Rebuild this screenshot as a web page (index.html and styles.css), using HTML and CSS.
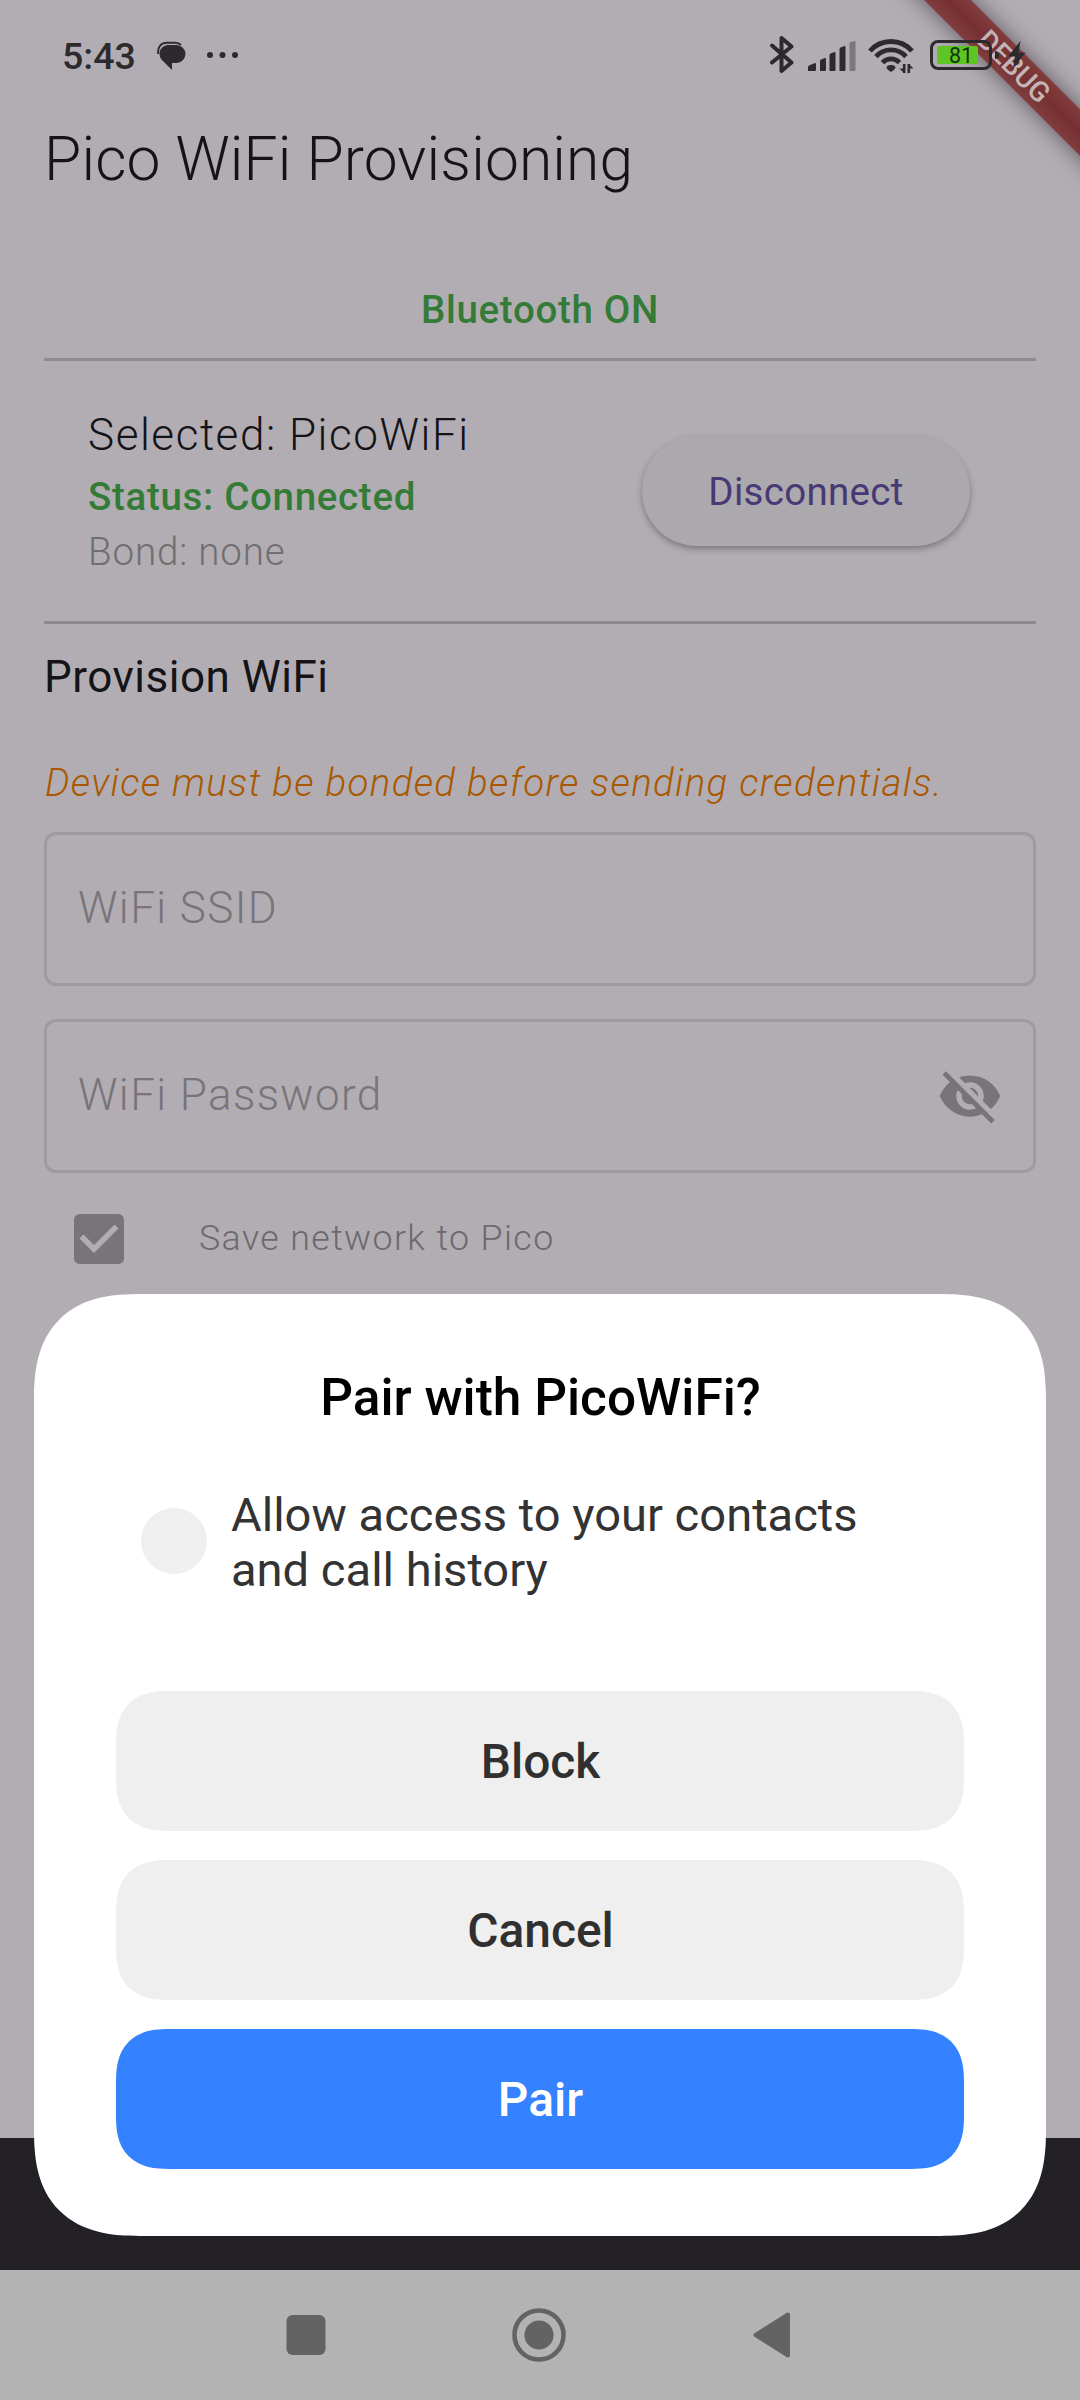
FILE: index.html
```html
<!DOCTYPE html>
<html lang="en">
<head>
<meta charset="utf-8">
<title>Pico WiFi Provisioning</title>
<link rel="stylesheet" href="styles.css">
</head>
<body>
<div class="screen">
  <div class="banner-clip"><div class="banner"><span>DEBUG</span></div></div>

  <header class="status-bar">
    <div class="status-left">
      <span class="clock">5:43</span>
      <svg class="ico-chat" width="30" height="30" viewBox="0 0 30 30">
        <path d="M1.200 13C.5 5 4.500 1.800 10 1.800h8c2.500 0 4.500.6 6 2.200" fill="none" stroke="#2c2a2d" stroke-width="2"/>
        <path d="M12 4h7.500a8.800 8.800 0 0 1 0 18H15v7L5.500 19.500C0 14 2.500 4 12 4z" fill="#2c2a2d"/>
      </svg>
      <svg class="ico-dots" width="34" height="8" viewBox="0 0 34 8" fill="#2c2a2d">
        <circle cx="4" cy="4" r="3"/><circle cx="16.500" cy="4" r="3"/><circle cx="29" cy="4" r="3"/>
      </svg>
    </div>
    <div class="status-right">
      <svg width="24" height="39" viewBox="0 0 24 39" fill="none" stroke="#2c2a2d" stroke-width="4" stroke-linejoin="round" stroke-linecap="round">
        <path d="M2 10.500 21.500 27.500 11.500 36V3L21.500 11.500 2 27.500"/>
      </svg>
      <svg class="ico-signal" width="48" height="30" viewBox="0 0 48 30" fill="#2c2a2d">
        <path d="M0 30v-4q0-1 1-1.500L7 22q1 0 1 1v6q0 1-1 1z"/>
        <path d="M12 30V20q0-1 1-1.500l4-1.500q1 0 1 1v11q0 1-1 1z"/>
        <path d="M21.500 30V14q0-1 1-1.500l4-1.500q1 0 1 1v17q0 1-1 1z"/>
        <path d="M31.500 30V8q0-1 1-1.500l4-1.500q1 0 1 1v23q0 1-1 1z"/>
        <path d="M41.500 30V2.500q0-1 1-1.500l4-1q1 0 1 1v28q0 1-1 1z" fill="#7b777c"/>
      </svg>
      <svg class="ico-wifi" width="48" height="37" viewBox="0 0 48 37" fill="none" stroke="#2c2a2d" stroke-width="4.800">
        <path d="M2 14A28 28 0 0 1 44 14"/>
        <path d="M8 19.700A20 20 0 0 1 38 19.700"/>
        <path d="M14.500 25.700a11.500 11.500 0 0 1 17 0"/>
        <path d="M18.500 31q0-3 4.500-3t4.500 3q-1 2-4.500 4-3.500-2-4.500-4z" fill="#2c2a2d" stroke="none"/>
        <path d="M36.200 27v9M40.800 27v9" stroke-width="2.600"/>
        <path d="M37 36h-1L31.500 31.500H37zM40 27h1l4.500 4.500H40z" fill="#2c2a2d" stroke="none"/>
      </svg>
      <div class="battery"><div class="battery-fill">81</div></div>
      <i class="battery-tip"></i>
      <svg class="ico-bolt" width="18" height="28" viewBox="0 0 18 28"><path d="M12.500 0 0 15.500h7L5 28 17.500 11.500h-7z" fill="#2c2a2d"/></svg>
    </div>
  </header>

  <h1 class="title">Pico WiFi Provisioning</h1>

  <main class="content">
    <p class="bt-state">Bluetooth ON</p>
    <hr class="divider">
    <section class="device">
      <div class="device-text">
        <div class="device-name">Selected: PicoWiFi</div>
        <div class="device-status">Status: Connected</div>
        <div class="device-bond">Bond: none</div>
      </div>
      <button class="disconnect">Disconnect</button>
    </section>
    <hr class="divider">
    <h2 class="section-title">Provision WiFi</h2>
    <p class="warning">Device must be bonded before sending credentials.</p>
    <div class="field"><span>WiFi SSID</span></div>
    <div class="field"><span>WiFi Password</span>
      <svg width="66" height="66" viewBox="0 0 24 24" fill="#787479"><path d="M12 7c2.760 0 5 2.240 5 5 0 .65-.13 1.260-.36 1.830l2.920 2.920c1.510-1.260 2.700-2.890 3.430-4.750-1.730-4.390-6-7.500-11-7.500-1.400 0-2.740.25-3.980.7l2.160 2.160C10.740 7.130 11.350 7 12 7zM2 4.270l2.280 2.280.46.46C3.080 8.300 1.780 10.020 1 12c1.730 4.390 6 7.500 11 7.500 1.550 0 3.030-.3 4.380-.84l.42.42L19.730 22 21 20.730 3.270 3 2 4.270zM7.530 9.800l1.550 1.550c-.05.21-.08.43-.08.65 0 1.660 1.340 3 3 3 .22 0 .44-.03.65-.08l1.550 1.550c-.67.33-1.410.53-2.200.53-2.760 0-5-2.240-5-5 0-.79.2-1.530.53-2.200zm4.310-.78 3.150 3.150.02-.16c0-1.660-1.340-3-3-3l-.17.01z"/></svg>
    </div>
    <div class="save-row">
      <svg width="50" height="50" viewBox="0 0 18 18"><rect width="18" height="18" rx="2" fill="#787479"/><path d="M2.700 8.100 7.200 12.600 15.300 4.500" fill="none" stroke="#b2adb3" stroke-width="2"/></svg>
      <span>Save network to Pico</span>
    </div>
  </main>

  <div class="app-bottom"></div>
  <nav class="nav-bar">
    <svg width="54" height="54" viewBox="0 0 54 54" fill="#636363"><rect x="7.500" y="7" width="39" height="40" rx="6"/></svg>
    <svg width="54" height="54" viewBox="0 0 54 54" fill="#636363"><circle cx="27" cy="27" r="24.500" fill="none" stroke="#636363" stroke-width="4.600"/><circle cx="27" cy="27" r="14.600"/></svg>
    <svg width="54" height="54" viewBox="0 0 54 54" fill="#636363" stroke="#636363" stroke-width="4" stroke-linejoin="round"><path d="M10.500 27 43 6.500V47.500z"/></svg>
  </nav>

  <div class="dialog">
    <h3 class="dialog-title">Pair with PicoWiFi?</h3>
    <label class="allow"><i class="radio"></i><span class="allow-text">Allow access to your contacts<br>and call history</span></label>
    <button class="btn">Block</button>
    <button class="btn">Cancel</button>
    <button class="btn btn-primary">Pair</button>
  </div>
</div>
</body>
</html>
```

FILE: styles.css
```css
* { box-sizing: border-box; margin: 0; padding: 0; }
body { font-family: Roboto, "Liberation Sans", sans-serif; }
button { border: 0; font-family: inherit; }
svg, i { display: block; flex: none; }

.screen {
  position: relative;
  width: 1080px;
  height: 2400px;
  overflow: hidden;
  display: flex;
  flex-direction: column;
  background: #b2adb3;
  color: #141317;
}

/* Diagonal corner banner, lies over the page corner */
.banner-clip { position: absolute; top: 0; right: 0; width: 240px; height: 240px; overflow: hidden; }
.banner {
  position: absolute;
  left: 24px;
  top: 49.500px;
  width: 300px;
  height: 33px;
  transform: rotate(45deg);
  box-shadow: 0 0 22px rgba(0, 0, 0, .5);
  background: linear-gradient(#813c3d, #763031 50%, #813c3d);
  color: #c3b5b7;
  font-size: 28px;
  line-height: 33px;
  font-weight: 500;
  text-align: center;
}

.status-bar { position: relative; display: flex; justify-content: space-between; height: 110px; padding: 0 54px 0 62px; }
.status-left { display: flex; align-items: flex-start; }
.clock { font-size: 37.500px; line-height: 44px; margin-top: 34px; width: 95px; font-weight: 500; color: #2c2a2d; }
.ico-chat { margin-top: 41px; }
.ico-dots { margin: 51px 0 0 19px; }
.status-right { display: flex; align-items: flex-start; padding-top: 35px; }
.ico-signal { margin: 6px 0 0 14px; }
.ico-wifi { margin: 2px 0 0 12px; }
.battery { width: 62px; height: 30px; margin: 5px 0 0 14px; padding: 3px 4px; border: 3px solid #2c2a2d; border-radius: 8px; }
.battery-fill { width: 41px; height: 18px; border-radius: 2px; background: #5dc524; color: #14330a; font-size: 21.500px; line-height: 20px; padding-left: 12px; }
.battery-tip { width: 4px; height: 8px; margin: 16px 0 0 3px; border-radius: 0 4px 4px 0; background: #2c2a2d; }
.ico-bolt { margin: 6px 0 0 9px; }

.title { height: 187px; padding: 13px 44px 0; font-size: 60.500px; line-height: 73px; font-weight: 300; letter-spacing: .150px; }

.content { flex: 1; padding: 0 44px; }
.bt-state { height: 69px; margin-top: -8px; padding-top: 1px; text-align: center; font-size: 38.500px; line-height: 40px; font-weight: 500; letter-spacing: .69px; color: #357b38; }
.divider { border: 0; height: 3px; background: #8e8a8f; }

.device { display: flex; justify-content: space-between; align-items: flex-start; height: 260px; padding: 48px 66px 0 44px; }
.device-name { font-size: 44px; line-height: 66px; font-weight: 300; letter-spacing: 1.550px; margin-top: -7px; }
.device-status, .device-bond { font-size: 38.500px; line-height: 55px; letter-spacing: .69px; }
.device-status { margin-top: 1px; font-weight: 500; color: #357b38; }
.device-bond { font-weight: 300; letter-spacing: .850px; color: #6f6f6f; }
.disconnect {
  width: 328px;
  height: 110px;
  margin-top: 27px;
  border-radius: 55px;
  background: #aba9ae;
  box-shadow: 0 3px 6px rgba(60, 45, 60, .42);
  color: #483873;
  font-size: 38.500px;
  letter-spacing: .3px;
}

.section-title { height: 134px; padding-top: 20px; font-size: 44px; line-height: 66px; font-weight: 400; letter-spacing: .5px; }
.warning { height: 74px; font-size: 38.500px; line-height: 49px; font-weight: 300; font-style: italic; letter-spacing: 1.310px; padding-left: 1px; color: #a95800; }
.field {
  display: flex;
  align-items: center;
  justify-content: space-between;
  height: 154px;
  margin-bottom: 33px;
  padding: 0 30px 0 31px;
  border: 3px solid #9f9a9f;
  border-radius: 12px;
  font-size: 44px;
  font-weight: 300;
  letter-spacing: 1.400px;
  color: #787479;
}
.field span, .save-row span { padding-bottom: 2px; }
.save-row { display: flex; align-items: center; gap: 75px; height: 50px; margin-top: 41px; padding-left: 30px; font-size: 35.750px; font-weight: 300; letter-spacing: 1.400px; color: #6c696d; }

.app-bottom { height: 132px; background: #232126; }
.nav-bar { display: flex; justify-content: center; align-items: center; gap: 179px; height: 130px; padding-right: 2px; background: #b3b3b3; }

/* Modal sheet, lies over the page */
.dialog {
  position: absolute;
  left: 34px;
  top: 1294px;
  width: 1012px;
  height: 942px;
  padding: 73px 82px 0;
  border-radius: 88px;
  background: #fff;
  display: flex;
  flex-direction: column;
}
.dialog-title { padding-left: 1px; text-align: center; font-size: 51.400px; line-height: 62px; font-weight: 500; color: #000; }
.allow { display: flex; align-items: center; gap: 24px; height: 110px; margin: 57px 0 95px; padding-left: 25px; font-size: 47.100px; line-height: 55px; color: #333; }
.allow-text { padding-top: 2px; }
.radio { width: 66px; height: 66px; border-radius: 50%; background: #efefef; }
.btn { flex: none; height: 140px; margin-bottom: 29px; padding: 2px 0 0 1px; border-radius: 44px; background: #efefef; color: #303030; font-size: 47.900px; font-weight: 500; }
.btn-primary { background: #3482ff; color: #fff; }

@supports (corner-shape: superellipse(1.340)) {
  .dialog { border-radius: 106px; corner-shape: superellipse(1.340); }
  .btn { border-radius: 53px; corner-shape: superellipse(1.340); }
}
```
